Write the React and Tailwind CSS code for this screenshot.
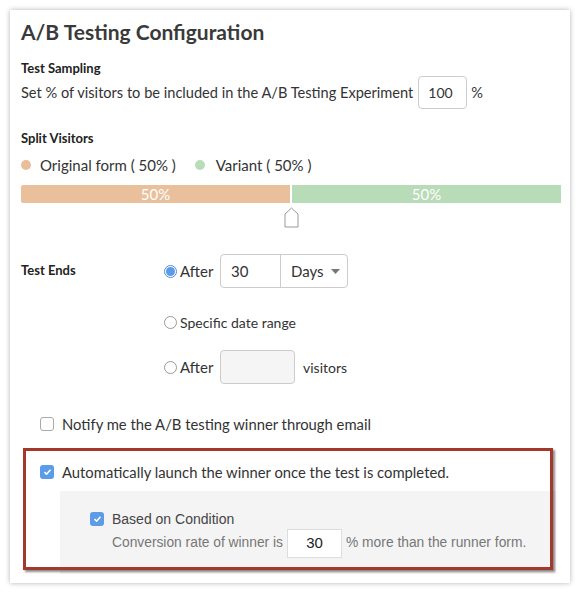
const Radio = ({ checked }) => (
  <span
    className={`inline-flex h-[13px] w-[13px] items-center justify-center rounded-full border ${
      checked ? "border-[#4a8fe0] bg-white" : "border-[#999] bg-white"
    }`}
  >
    {checked && <span className="h-[9px] w-[9px] rounded-full bg-[#5b9be6]" />}
  </span>
);

const Checkbox = ({ checked }) =>
  checked ? (
    <span className="inline-flex h-[14px] w-[14px] items-center justify-center rounded-[3px] bg-[#5b9be8]">
      <svg width="9" height="8" viewBox="0 0 9 8">
        <path d="M1.5 4.2 L3.6 6.2 L7.5 1.8" fill="none" stroke="white" strokeWidth="1.6" />
      </svg>
    </span>
  ) : (
    <span className="inline-block h-[14px] w-[14px] rounded-[3px] border border-[#aaa] bg-white" />
  );

const App = () => {
  return (
    <div className="h-[594px] w-[579px] bg-white p-[10px] font-['Lato',sans-serif] text-[#333]">
      <div className="relative h-[573px] w-[560px] bg-white px-[11px] pt-[8px] shadow-[0_0_5px_rgba(0,0,0,0.3)]">
        <h1 className="h-[28px] text-[21px] leading-[28px] font-bold text-[#3a3a3a]">
          A/B Testing Configuration
        </h1>

        <div className="mt-[14px] h-[16px] text-[13px] leading-[16px] font-bold text-[#222]">
          Test Sampling
        </div>
        <div className="flex h-[33px] items-center text-[14.6px]">
          <span>Set % of visitors to be included in the A/B Testing Experiment</span>
          <span className="ml-[5px] flex h-[33px] w-[49px] items-center rounded-[4px] border border-[#ccc] pl-[9px] text-[14px]">
            100
          </span>
          <span className="ml-[4px]">%</span>
        </div>

        <div className="mt-[21px] h-[16px] text-[13px] leading-[16px] font-bold text-[#222]">
          Split Visitors
        </div>
        <div className="mt-[9px] flex h-[20px] items-center text-[15px]">
          <span className="h-[10px] w-[10px] rounded-full bg-[#e8bf98]" />
          <span className="ml-[9px]">Original form ( 50% )</span>
          <span className="ml-[19px] h-[10px] w-[10px] rounded-full bg-[#b9dcb9]" />
          <span className="ml-[11px]">Variant ( 50% )</span>
        </div>

        <div className="mt-[10px] -mr-[2px] flex h-[18px] text-[15px] leading-[18px] text-white">
          <div className="w-[269px] rounded-l-[2px] bg-[#e9c09b] text-center">50%</div>
          <div className="ml-[2px] flex-1 bg-[#b8dbb8] text-center">50%</div>
        </div>
        <div className="mt-[4px] flex h-[20px] justify-center pl-[2px]">
          <svg width="15" height="21" viewBox="0 0 15 21">
            <path d="M1 20 L1 7 L7.5 1 L14 7 L14 20 Z" fill="white" stroke="#999" strokeWidth="1" />
          </svg>
        </div>

        <div className="mt-[27px] flex h-[34px] items-center text-[14px]">
          <span className="w-[143px] text-[13px] font-bold text-[#222]">Test Ends</span>
          <Radio checked />
          <span className="ml-[3px] w-[40px] text-[15px]">After</span>
          <div className="flex h-[34px] rounded-[4px] border border-[#ccc] text-[15px]">
            <span className="flex w-[59px] items-center pl-[10px]">30</span>
            <span className="flex w-[67px] items-center border-l border-[#ccc] pl-[10px]">
              Days
              <svg className="ml-[7px]" width="9" height="5" viewBox="0 0 9 5">
                <path d="M0 0 L9 0 L4.5 5 Z" fill="#777" />
              </svg>
            </span>
          </div>
        </div>

        <div className="mt-[24px] flex h-[20px] items-center pl-[143px] text-[14px]">
          <Radio />
          <span className="ml-[3px]">Specific date range</span>
        </div>

        <div className="mt-[18px] flex h-[34px] items-center pl-[143px] text-[15px]">
          <Radio />
          <span className="ml-[3px] w-[40px]">After</span>
          <span className="h-[34px] w-[75px] rounded-[4px] border border-[#ccc] bg-[#f5f5f5]" />
          <span className="ml-[8px] text-[14px]">visitors</span>
        </div>

        <div className="mt-[30px] flex h-[20px] items-center pl-[19px] text-[14.8px]">
          <Checkbox />
          <span className="ml-[8px]">Notify me the A/B testing winner through email</span>
        </div>

        <div className="mt-[28px] flex h-[20px] items-center pl-[19px] text-[14.8px]">
          <Checkbox checked />
          <span className="ml-[8px]">Automatically launch the winner once the test is completed.</span>
        </div>

        <div className="mt-[9px] mr-[3px] ml-[39px] h-[83px] bg-[#f4f4f4] pt-[19px] pl-[30px] font-['Liberation_Sans',sans-serif] text-[14px]">
          <div className="flex h-[18px] items-center text-[#444]">
            <Checkbox checked />
            <span className="ml-[8px]">Based on Condition</span>
          </div>
          <div className="mt-[1px] flex h-[29px] items-center pl-[22px] text-[13.8px] text-[#777]">
            <span>Conversion rate of winner is</span>
            <span className="ml-[4px] flex h-[29px] w-[55px] items-center justify-center border border-[#ddd] bg-white text-[15px] text-[#222]">
              30
            </span>
            <span className="ml-[4px]">% more than the runner form.</span>
          </div>
        </div>

        <div className="pointer-events-none absolute top-[438px] left-[13px] h-[122px] w-[530px] border-[3px] border-[#a3392b] shadow-[2px_2px_2px_rgba(0,0,0,0.45)]" />
      </div>
    </div>
  );
};

export default App;
